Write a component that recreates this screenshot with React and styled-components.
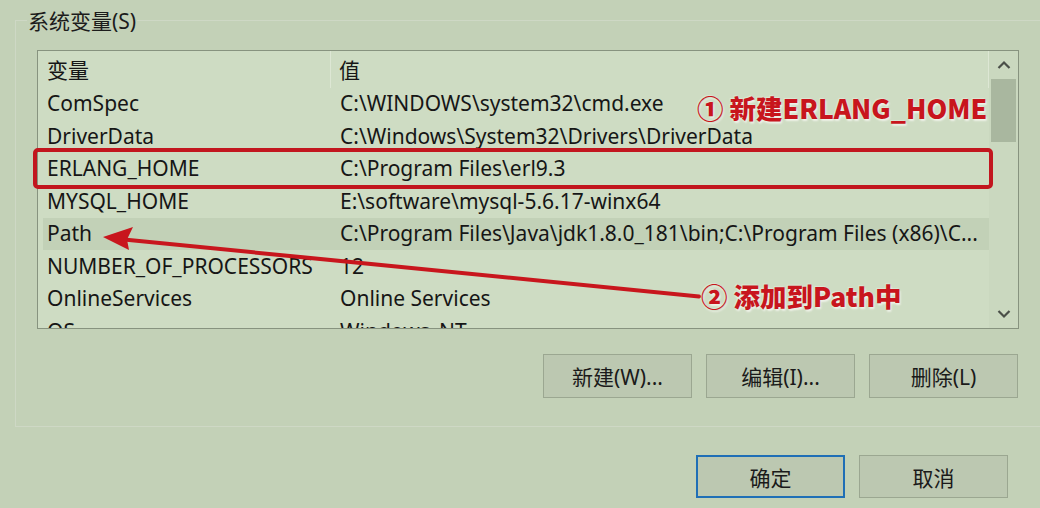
import React from "react";
import styled, { createGlobalStyle } from "styled-components";

const Global = createGlobalStyle`
  html, body { margin: 0; padding: 0; }
  body {
    background: #c3d1b7;
    font-family: "Noto Sans", "Noto Sans CJK SC", sans-serif;
    color: #161616;
    overflow: hidden;
  }
  #root { width: 1040px; height: 508px; }
`;

const Page = styled.div`
  position: relative;
  width: 1040px;
  height: 508px;
  overflow: hidden;
  padding-top: 20px;
  box-sizing: border-box;
`;

const GroupBox = styled.section`
  margin-left: 15px;
  width: 1040px;
  box-sizing: border-box;
  border: 1px solid #ced8c5;
  padding: 0 0 28px 21px;
`;

const Legend = styled.div`
  width: fit-content;
  margin: -14px 0 0 -10px;
  padding: 0 1px;
  background: #c3d1b7;
  font-size: 21px;
  line-height: 29px;
  color: #1c1c1c;
`;

const ListBox = styled.div`
  margin-top: 14px;
  width: 982px;
  height: 279px;
  box-sizing: border-box;
  border: 1px solid #87937f;
  background: #cedcc3;
  display: flex;
  overflow: hidden;
`;

const ListContent = styled.div`
  flex: 1;
  min-width: 0;
  overflow: hidden;
`;

const HeaderRow = styled.div`
  height: 36.5px;
  display: grid;
  grid-template-columns: 293px 1fr;
  border-right: 1px solid #dde7d4;
  font-size: 21px;
`;

const HeaderCell = styled.div`
  display: flex;
  align-items: center;
  padding-left: ${(p) => p.$pad}px;
  border-right: ${(p) => (p.$divider ? "1px solid #dde7d4" : "none")};
`;

const Row = styled.div`
  height: 32.5px;
  margin-left: 5px;
  display: grid;
  grid-template-columns: 289px 1fr;
  align-items: center;
  font-size: 21px;
  white-space: nowrap;
  background: ${(p) => (p.$hover ? "#c2d1b7" : "transparent")};
`;

const Cell = styled.div`
  padding-left: ${(p) => p.$pad}px;
  overflow: hidden;
  line-height: 31px;
`;

const ScrollBar = styled.div`
  width: 29px;
  background: #cad8bf;
  display: flex;
  flex-direction: column;
  align-items: center;
`;

const ArrowBtn = styled.div`
  height: ${(p) => p.$h}px;
  width: 100%;
  display: flex;
  align-items: center;
  justify-content: center;
`;

const Thumb = styled.div`
  width: 25px;
  height: 63px;
  background: #a9b79f;
`;

const Spacer = styled.div`
  flex: 1;
`;

const ButtonRow = styled.div`
  width: 982px;
  margin-top: 25px;
  padding-right: 1px;
  box-sizing: border-box;
  display: flex;
  justify-content: flex-end;
  gap: 14px;
`;

const Button = styled.div`
  width: 149px;
  height: ${(p) => p.$h || 44}px;
  box-sizing: border-box;
  background: #bcc8b1;
  border: ${(p) => (p.$default ? "2px solid #1f6fb6" : "1px solid #9ba791")};
  display: flex;
  align-items: center;
  justify-content: center;
  font-size: 21px;
  color: #1a1a1a;
`;

const DialogButtons = styled.div`
  margin-top: 28px;
  padding-right: 32px;
  display: flex;
  justify-content: flex-end;
  gap: 14px;
`;

const Overlay = styled.svg`
  position: absolute;
  left: 0;
  top: 0;
  pointer-events: none;
`;

const Note = styled.div`
  position: absolute;
  left: ${(p) => p.$x}px;
  top: ${(p) => p.$y}px;
  font-family: "Noto Sans CJK SC", "Noto Sans", sans-serif;
  font-weight: 900;
  font-size: 26.5px;
  line-height: 30px;
  color: #c8151d;
  white-space: nowrap;
  text-shadow: 1px 2px 2px rgba(250, 250, 245, 0.75), -1px -1px 1px rgba(250, 250, 245, 0.35);
`;

const Chevron = ({ up }) => (
  <svg width="14" height="10" viewBox="0 0 14 10">
    <path
      d={up ? "M1.5 8 L7 2.5 L12.5 8" : "M1.5 2 L7 7.5 L12.5 2"}
      fill="none"
      stroke="#4a4f48"
      strokeWidth="2.2"
    />
  </svg>
);

const rows = [
  ["ComSpec", "C:\\WINDOWS\\system32\\cmd.exe"],
  ["DriverData", "C:\\Windows\\System32\\Drivers\\DriverData"],
  ["ERLANG_HOME", "C:\\Program Files\\erl9.3"],
  ["MYSQL_HOME", "E:\\software\\mysql-5.6.17-winx64"],
  ["Path", "C:\\Program Files\\Java\\jdk1.8.0_181\\bin;C:\\Program Files (x86)\\C..."],
  ["NUMBER_OF_PROCESSORS", "12"],
  ["OnlineServices", "Online Services"],
  ["OS", "Windows_NT"],
];

export default function App() {
  return (
    <>
      <Global />
      <Page>
        <GroupBox>
          <Legend>系统变量(S)</Legend>
          <ListBox>
            <ListContent>
              <HeaderRow>
                <HeaderCell $pad={9} $divider>变量</HeaderCell>
                <HeaderCell $pad={8}>值</HeaderCell>
              </HeaderRow>
              {rows.map(([k, v]) => (
                <Row key={k} $hover={k === "Path"}>
                  <Cell $pad={4}>{k}</Cell>
                  <Cell $pad={8}>{v}</Cell>
                </Row>
              ))}
            </ListContent>
            <ScrollBar>
              <ArrowBtn $h={28}>
                <Chevron up />
              </ArrowBtn>
              <Thumb />
              <Spacer />
              <ArrowBtn $h={28}>
                <Chevron />
              </ArrowBtn>
            </ScrollBar>
          </ListBox>
          <ButtonRow>
            <Button>新建(W)...</Button>
            <Button>编辑(I)...</Button>
            <Button>删除(L)</Button>
          </ButtonRow>
        </GroupBox>
        <DialogButtons>
          <Button $h={43} $default>确定</Button>
          <Button $h={43}>取消</Button>
        </DialogButtons>

        <Overlay width="1040" height="508" viewBox="0 0 1040 508">
          <rect x="35" y="150" width="956" height="37" rx="3" fill="none" stroke="#c2161e" strokeWidth="4" />
          <line x1="699" y1="296.5" x2="124" y2="239.5" stroke="#c8161d" strokeWidth="4" strokeLinecap="round" />
          <polygon points="103,237 133,227 127,239.5 129,250" fill="#c8161d" />
        </Overlay>
        <Note $x={697} $y={93}>① 新建ERLANG_HOME</Note>
        <Note $x={701} $y={281}>② 添加到Path中</Note>
      </Page>
    </>
  );
}
